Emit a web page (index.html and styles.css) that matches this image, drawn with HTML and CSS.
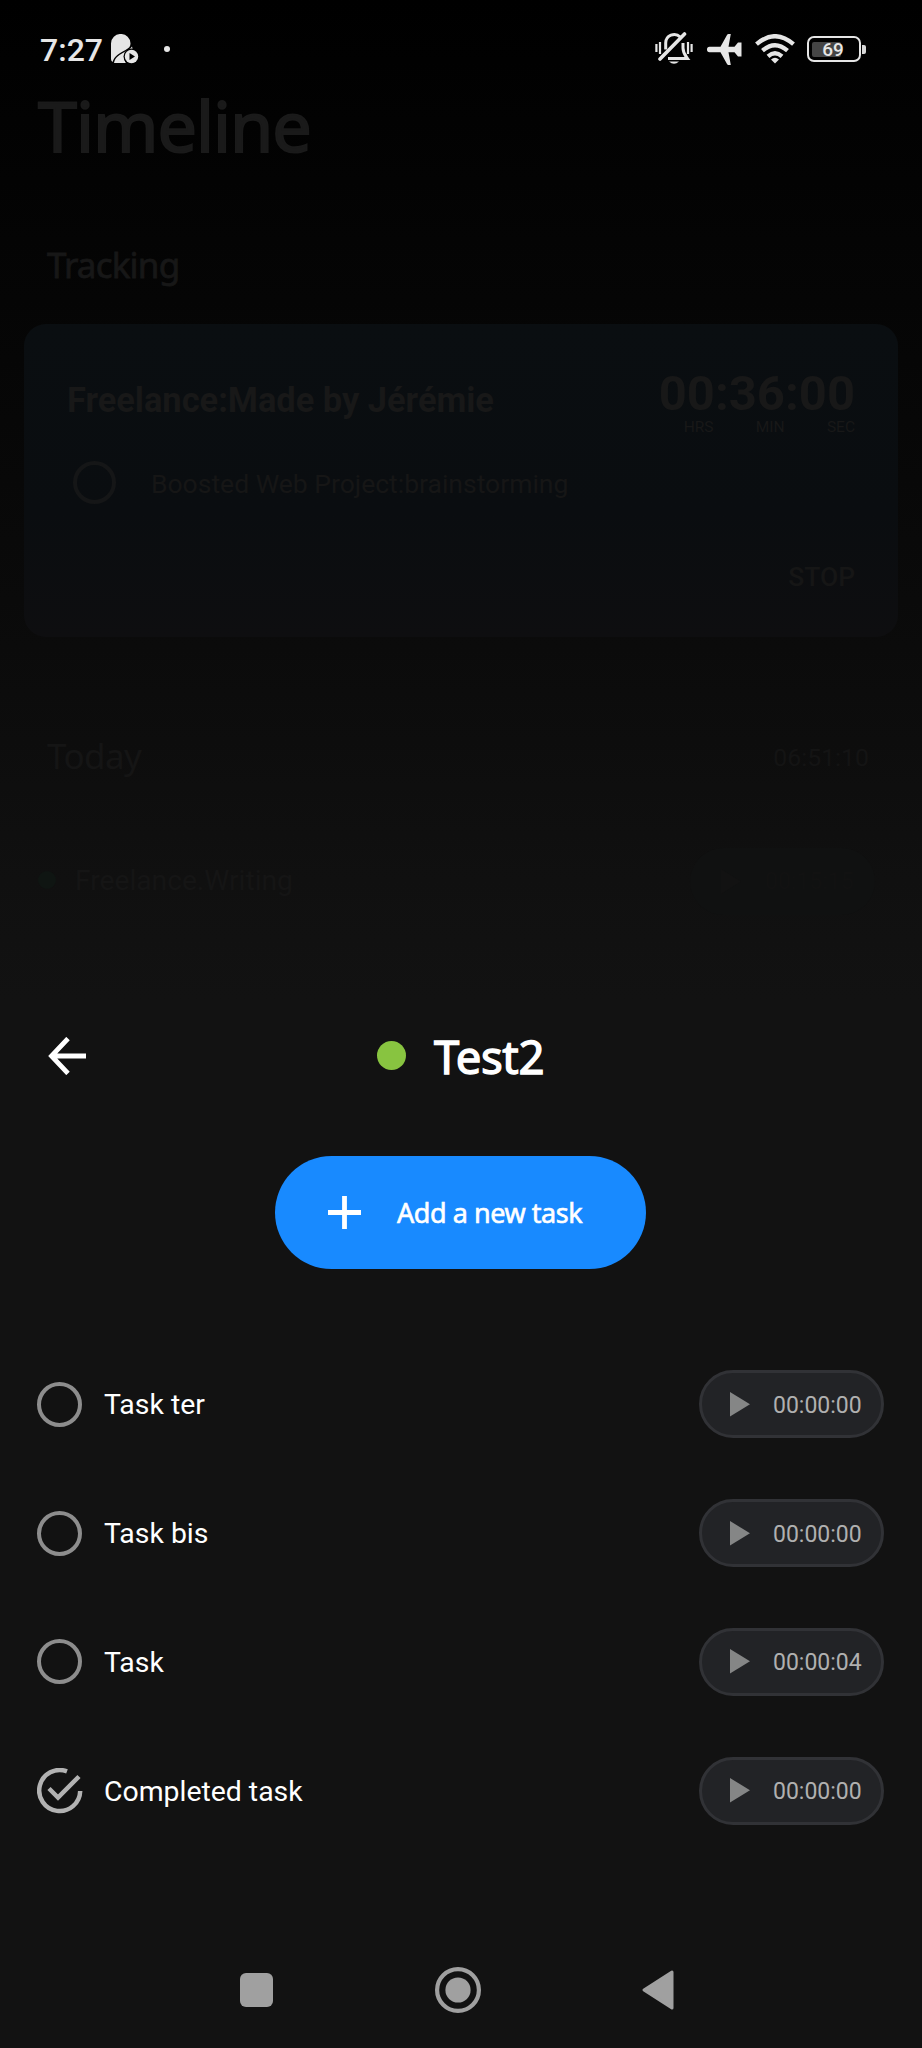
FILE: index.html
```html
<!DOCTYPE html>
<html lang="en">
<head>
<meta charset="utf-8">
<title>Timeline</title>
<link rel="stylesheet" href="styles.css">
</head>
<body>
<div class="screen">
  <header class="status">
    <div class="status-left">
      <span class="clock">7:27</span>
      <svg class="ic-app" width="28" height="30" viewBox="0 0 28 30">
        <path fill="#e6e6e6" d="M0 9.500a9.700 9.500 0 0 1 19.500 0c0 3-1.500 4.500-5 6.500C8 19.500 3.500 22 1.500 28Q0 27 0 25z"/>
        <path fill="#e6e6e6" d="M3 29c1-6 6-8.500 10.500-11 4-2 6-3.500 7.500-5.500l1 4-5 3c-4 3-4 7-2 9.500z"/>
        <circle cx="20.500" cy="22.500" r="8" fill="#000"/>
        <circle cx="20.500" cy="22.500" r="6.700" fill="#e6e6e6"/>
        <path d="M18.500 19l5.500 3.500-5.500 3.500z" fill="#000"/>
      </svg>
      <span class="status-dot"></span>
    </div>
    <div class="status-right">
      <svg width="38" height="34" viewBox="0 0 38 34" fill="none" stroke="#e6e6e6" stroke-width="2.600">
        <path d="M1.400 12v8M5 10v12M33 10v12M36.600 12v8" stroke-width="2.200"/>
        <path d="M10.700 17.500V11a8.500 8.500 0 0 1 14.500-6M28 11v5c0 5 2 7 4.500 10.500H13" stroke-width="3"/>
        <path d="M5 27L29.500 2" stroke-width="3.600" stroke-linecap="round"/>
        <path d="M14 29.500h10q-5 4.500-10 0z" fill="#e6e6e6" stroke="none"/>
      </svg>
      <svg class="ic-plane" width="35" height="31" viewBox="0 0 35 31" fill="#e6e6e6">
        <path d="M0 15.500q0-2.700 2.500-2.700H13.500L20 1q.5-1 1.500-1h2.300L21.500 12.800h6L31 8.500h3.500v14H31l-3.500-4.300h-6L23.800 31h-2.300q-1 0-1.500-1L13.500 18.200H2.500Q0 18.200 0 15.500z"/>
      </svg>
      <svg class="ic-wifi" width="40" height="30" viewBox="0 0 40 30" fill="none" stroke="#e6e6e6" stroke-width="4.300">
        <path d="M1.500 10.200q18.500-16 37 0M7.500 16.700q12.500-11 25 0M13 22.300q7-6 14 0"/>
        <path d="M20 29.500l-4-4q4-3.400 8 0z" fill="#e6e6e6" stroke="none"/>
      </svg>
      <div class="battery"><span class="battery-fill"></span><span class="battery-num">69</span></div>
      <span class="battery-nub"></span>
    </div>
  </header>

  <main class="timeline">
    <h1>Timeline</h1>
    <h2 class="tracking">Tracking</h2>
    <section class="card">
      <div class="card-head">
        <div class="card-title">Freelance:Made by Jérémie</div>
        <div class="timer">
          <div class="timer-value">00:36:00</div>
          <div class="timer-labels"><span>HRS</span><span>MIN</span><span>SEC</span></div>
        </div>
      </div>
      <div class="card-task"><span class="dim-ring"></span><span class="card-task-name">Boosted Web Project:brainstorming</span></div>
      <div class="stop"><span>STOP</span></div>
    </section>
    <div class="day"><span class="day-name">Today</span><span class="day-total">06:51:10</span></div>
    <div class="entry">
      <span class="entry-dot"></span><span class="entry-name">Freelance.Writing</span>
      <span class="entry-pill"><svg width="20" height="25" viewBox="0 0 20 25"><path d="M0 0l20 12.500L0 25z" fill="#121212"/></svg><span>00:15:15</span></span>
    </div>
  </main>

  <section class="sheet">
    <div class="sheet-head">
      <svg class="back" width="38" height="38" viewBox="0 0 38 38" fill="none" stroke="#fff" stroke-width="4.800"><path d="M38 19H4M20 1.500L3.500 19 20 36.500"/></svg>
      <span class="project-dot"></span><span class="project-name">Test2</span>
    </div>
    <div class="add">
      <svg width="33" height="33" viewBox="0 0 33 33" stroke="#fff" stroke-width="4.800"><path d="M0 16.500h33M16.500 0v33"/></svg>
      <span>Add a new task</span>
    </div>
    <div class="tasks">
      <div class="task"><span class="ring"></span><span class="task-name">Task ter</span><span class="pill"><svg width="20" height="25" viewBox="0 0 20 25"><path d="M0 0l20 12.300L0 24.600z" fill="#858686"/></svg><span>00:00:00</span></span></div>
      <div class="task"><span class="ring"></span><span class="task-name">Task bis</span><span class="pill"><svg width="20" height="25" viewBox="0 0 20 25"><path d="M0 0l20 12.300L0 24.600z" fill="#858686"/></svg><span>00:00:00</span></span></div>
      <div class="task"><span class="ring"></span><span class="task-name">Task</span><span class="pill"><svg width="20" height="25" viewBox="0 0 20 25"><path d="M0 0l20 12.300L0 24.600z" fill="#858686"/></svg><span>00:00:04</span></span></div>
      <div class="task">
        <svg class="check" width="46" height="46" viewBox="0 0 46 46" fill="none" stroke="#b2b2b2" stroke-width="4.500"><path d="M30 3.400A20.500 20.500 0 1 0 43.200 23"/><path d="M12 20.500l9 9L42 8.500"/></svg>
        <span class="task-name">Completed task</span><span class="pill"><svg width="20" height="25" viewBox="0 0 20 25"><path d="M0 0l20 12.300L0 24.600z" fill="#858686"/></svg><span>00:00:00</span></span></div>
    </div>
  </section>

  <nav class="nav">
    <span class="nav-square"></span>
    <svg class="nav-home" width="46" height="46" viewBox="0 0 46 46"><circle cx="23" cy="23" r="20.900" fill="none" stroke="#a0a0a0" stroke-width="4.200"/><circle cx="23" cy="23" r="12.600" fill="#a0a0a0"/></svg>
    <svg class="nav-back" width="32" height="40" viewBox="0 0 32 40"><path d="M2 20L30 2v36z" fill="#a0a0a0" stroke="#a0a0a0" stroke-width="3" stroke-linejoin="round"/></svg>
  </nav>
</div>
</body>
</html>
```
FILE: styles.css
```css
* { box-sizing: border-box; }
html, body { margin: 0; background: #121212; }
.screen {
  width: 922px; height: 2048px; overflow: hidden;
  display: flex; flex-direction: column;
  font-family: Roboto, sans-serif; white-space: nowrap;
  background: linear-gradient(#000 0, #010101 60px, #050505 300px, #0a0a0a 600px, #101010 880px, #121212 1000px);
}
svg { display: block; flex: none; }

.status { height: 97px; flex: none; display: flex; justify-content: space-between; padding: 0 56px 0 40px; }
.status-left, .status-right { display: flex; align-items: center; height: 98px; }
.clock { font-size: 32px; font-weight: 500; color: #e6e6e6; line-height: 40px; width: 71px; padding-top: 1px; }
.status-dot { width: 6px; height: 6px; border-radius: 50%; background: #e6e6e6; margin-left: 25px; }
.ic-plane { margin-left: 14px; }
.ic-wifi { margin-left: 13px; }
.battery {
  width: 54px; height: 26px; margin-left: 12px; border: 2.5px solid #e6e6e6; border-radius: 7px;
  display: grid; align-items: center; padding: 0 3px;
}
.battery-fill, .battery-num { grid-area: 1 / 1; }
.battery-fill { width: 29px; height: 15px; background: #454545; border-radius: 2px; }
.battery-num { text-align: center; color: #e6e6e6; font-weight: 500; font-size: 19px; line-height: 20px; padding: 1px 2px 0 0; }
.battery-nub { width: 4px; height: 9px; background: #d8d8d8; border-radius: 0 2px 2px 0; margin-left: 1px; }

.timeline { height: 908px; flex: none; color: #181818; }
h1, h2, .day-name, .project-name, .add span { font-family: "Noto Sans", sans-serif; }
h1 { margin: 0 0 0 38px; font-size: 70px; font-weight: 400; line-height: 56px; height: 56px; letter-spacing: -1px; color: #1a1a1a; -webkit-text-stroke: 2px #1a1a1a; }
.tracking { margin: 92px 0 39px 47px; font-size: 35px; font-weight: 400; line-height: 40px; letter-spacing: -.8px; color: #171717; -webkit-text-stroke: .8px #171717; }
.card {
  margin: 0 24px; height: 313px; border-radius: 22px; padding: 40px 43px 0;
  background: linear-gradient(#0a0e11, #0a0d10 60%, #0e0e10);
}
.card-head { display: flex; justify-content: space-between; height: 89px; }
.card-title { font-weight: 700; font-size: 34.4px; line-height: 40px; padding-top: 16px; }
.timer { padding-top: 6px; }
.timer-value { font-weight: 700; font-size: 49px; line-height: 48px; text-align: right; }
.timer-labels { display: flex; justify-content: space-between; padding-left: 25px; font-size: 15.5px; line-height: 18px; }
.card-task { display: flex; align-items: center; height: 58px; }
.dim-ring { width: 43px; height: 43px; border: 4px solid #151617; border-radius: 50%; margin-left: 6px; }
.card-task-name { font-size: 26.5px; margin-left: 35px; padding-top: 2px; color: #161616; }
.stop { display: flex; justify-content: flex-end; margin-top: 46px; font-weight: 500; font-size: 26.4px; line-height: 40px; color: #161616; }
.day { display: flex; justify-content: space-between; align-items: center; height: 60px; margin-top: 88px; padding: 0 53px 0 47px; }
.day-name { font-size: 35px; line-height: 40px; letter-spacing: -.6px; color: #151515; padding-top: 1px; }
.day-total { font-size: 24.8px; padding-top: 4px; color: #141414; }
.entry { display: flex; align-items: center; margin-top: 63px; height: 67px; padding: 0 47px 0 38px; color: #151515; }
.entry-dot { width: 18px; height: 18px; border-radius: 50%; background: #0f1512; margin-bottom: 4px; }
.entry-name { font-size: 28.2px; margin-left: 19px; flex: 1; padding-bottom: 3px; }
.entry-pill { width: 185px; height: 67px; border-radius: 34px; background: #101111; display: flex; align-items: center; padding-left: 31px; gap: 24px; font-size: 23px; color: #121212; }

.sheet { flex: none; height: 927px; }
.sheet-head { display: flex; align-items: center; height: 101px; padding-left: 48px; }
.project-dot { width: 29px; height: 29px; border-radius: 50%; background: #88c440; margin-left: 291px; }
.project-name { margin-left: 28px; font-size: 45.500px; line-height: 60px; letter-spacing: -.4px; color: #fff; -webkit-text-stroke: 1.300px #fff; }
.add { display: flex; align-items: center; width: 371px; height: 113px; margin: 50px 0 0 275px; border-radius: 57px; background: #188aff; color: #fff; padding-left: 53px; }
.add span { font-size: 27px; letter-spacing: -.45px; margin-left: 36px; -webkit-text-stroke: .6px #fff; }
.tasks { margin-top: 71px; }
.task { display: flex; align-items: center; height: 128.800px; padding: 0 38px 0 37px; }
.ring { width: 45px; height: 45px; border: 4px solid #8d8d8d; border-radius: 50%; }
.check { margin-right: -1px; }
.task-name { flex: 1; margin-left: 22px; color: #fff; font-size: 28.400px; padding-top: 1px; }
.pill {
  width: 185px; height: 68px; border: 3px solid #313236; border-radius: 34px; background: #222326;
  display: flex; align-items: center; padding-left: 28px; color: #b0b0b0; font-size: 23px;
}
.pill span { margin-left: 23px; padding-top: 2px; }

.nav { height: 116px; flex: none; display: flex; align-items: center; padding-left: 240px; }
.nav-square { width: 33px; height: 34px; border-radius: 6px; background: #a0a0a0; }
.nav-home { margin-left: 162px; }
.nav-back { margin-left: 161px; }
```
